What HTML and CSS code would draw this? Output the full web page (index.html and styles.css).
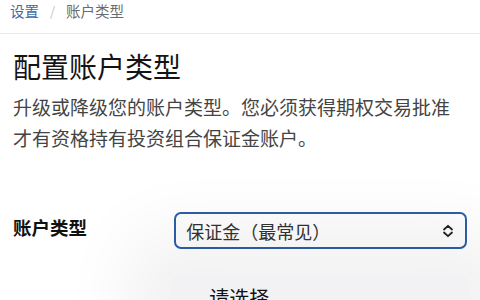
FILE: index.html
```html
<!DOCTYPE html>
<html lang="zh-CN">
<head>
<meta charset="utf-8">
<link rel="stylesheet" href="styles.css">
</head>
<body>
<nav class="crumbs">
  <a class="crumb-link" href="#">设置</a>
  <span class="crumb-sep">/</span>
  <span class="crumb-current">账户类型</span>
</nav>
<main class="page">
  <h1 class="title">配置账户类型</h1>
  <p class="desc">升级或降级您的账户类型。您必须获得期权交易批准才有资格持有投资组合保证金账户。</p>
  <div class="field">
    <div class="label">账户类型</div>
    <div class="control">
      <div class="select">
        <span class="select-text">保证金（最常见）</span>
        <svg class="chev" width="12" height="14" viewBox="0 0 12 14"><path d="M2 5.5 L6 1.8 L10 5.5 M2 8.5 L6 12.2 L10 8.5" fill="none" stroke="#222" stroke-width="1.8" stroke-linecap="round" stroke-linejoin="round"/></svg>
      </div>
      <div class="menu">
        <div class="menu-item">请选择</div>
      </div>
    </div>
  </div>
</main>
</body>
</html>
```
FILE: styles.css
```css
html, body {
  margin: 0;
  padding: 0;
  background: #ffffff;
  overflow: hidden;
  height: 300px;
}
body {
  font-family: "Noto Sans CJK SC", "Noto Sans", sans-serif;
  color: #111;
}
.crumbs {
  height: 34px;
  box-sizing: border-box;
  display: flex;
  align-items: flex-start;
  gap: 11px;
  padding: 0 0 0 10px;
  font-size: 14.5px;
  line-height: 22px;
  border-bottom: 1.5px solid #e9e9e9;
}
.crumb-link {
  color: #3f6aa6;
  text-decoration: none;
}
.crumb-sep {
  color: #c2c2c2;
  font-size: 13px;
}
.crumb-current {
  color: #6b6b6b;
}
.page {
  padding: 0 13px;
}
.title {
  margin: 13px 0 0;
  font-size: 28px;
  font-weight: 400;
  line-height: 38px;
  color: #141414;
}
.desc {
  margin: 6px 0 0;
  font-size: 19px;
  line-height: 31px;
  color: #444;
  max-width: 440px;
}
.field {
  display: flex;
  margin-top: 59px;
}
.label {
  width: 162px;
  font-size: 18.5px;
  font-weight: 700;
  line-height: 28px;
  padding-top: 1px;
}
.control {
  position: relative;
  width: 294px;
}
.select {
  height: 37px;
  box-sizing: border-box;
  border: 2px solid #2c5ea8;
  border-radius: 7px;
  background: #fdfdfd;
  display: flex;
  align-items: center;
  justify-content: space-between;
  padding: 0 11px 0 10px;
}
.select-text {
  font-size: 18px;
  color: #333;
}
.chev {
  display: block;
}
.menu {
  position: absolute;
  left: -3px;
  top: 62px;
  width: 298px;
  height: 60px;
  background: #f2f2f4;
  border-radius: 12px;
  box-shadow: 0 0 70px 45px rgba(0,0,0,0.055);
}
.menu-item {
  padding: 10px 0 0 38px;
  font-size: 20px;
  line-height: 28px;
  color: #111;
}
```
